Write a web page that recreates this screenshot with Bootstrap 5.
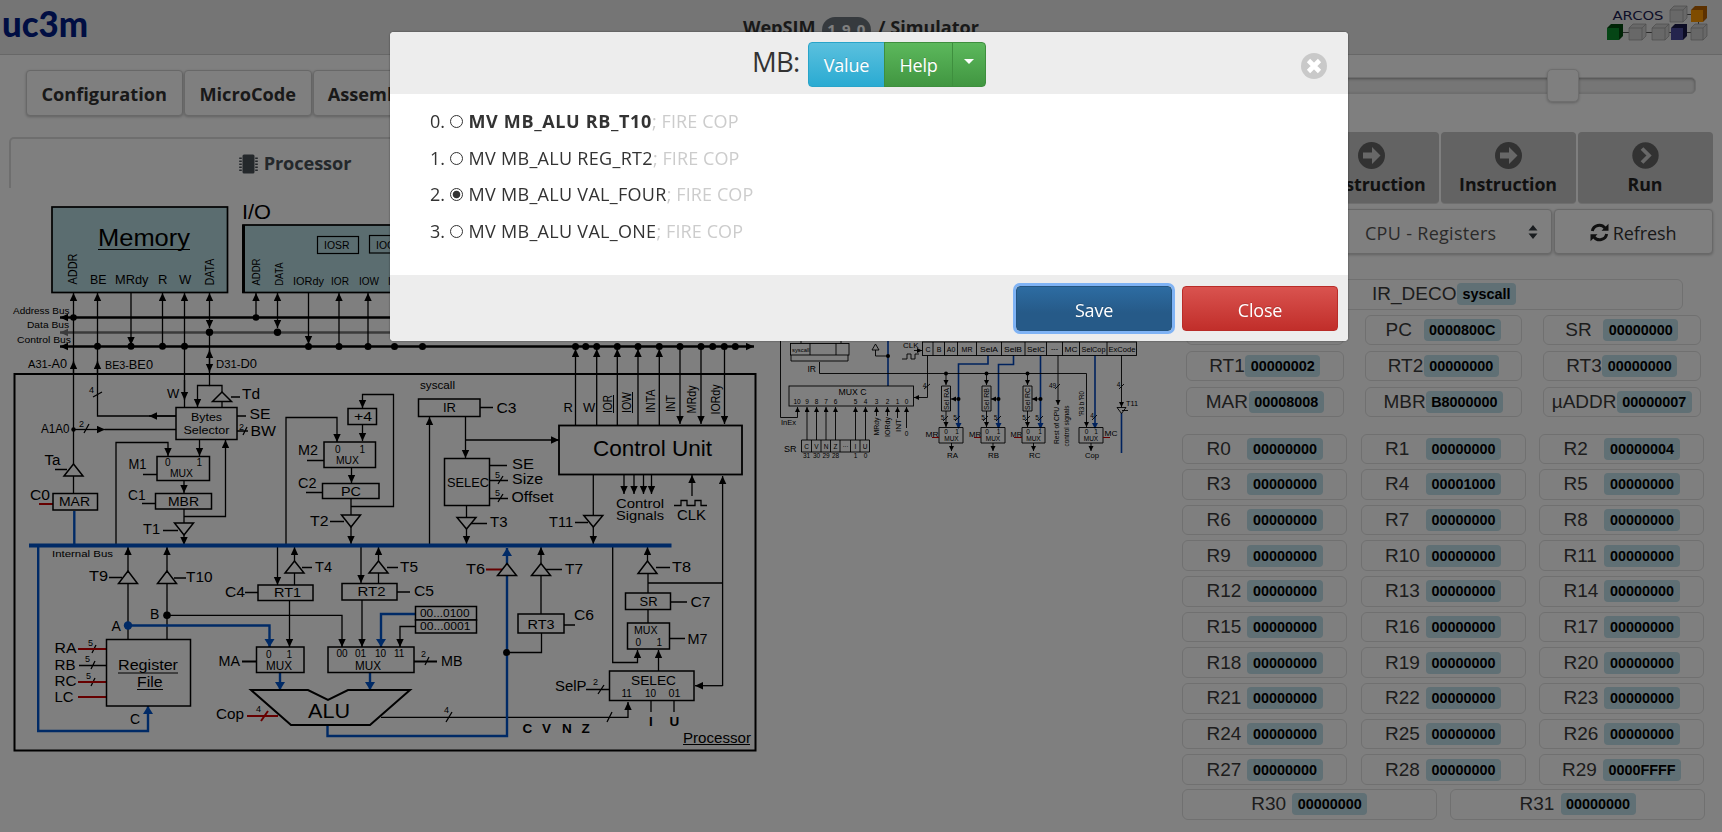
<!DOCTYPE html>
<html lang="en">
<head>
<meta charset="utf-8">
<meta name="viewport" content="width=device-width, initial-scale=1">
<title>WepSIM / Simulator</title>
<link href="https://cdn.jsdelivr.net/npm/bootstrap@5.3.0/dist/css/bootstrap.min.css" rel="stylesheet">
<style>
body{font-family:"Open Sans","Noto Sans",sans-serif;font-size:17.3px;color:#212529;overflow:hidden;height:832px;background:#fff}
.topbar{height:55px;background:#ebebeb;border-bottom:1px solid #cfcfcf}
.topbar .side-box{width:160px}
.app-title{font-size:18.1px;font-weight:700;color:#333;line-height:24px;margin-top:15px;letter-spacing:0;white-space:nowrap}
.app-title .badge{font-size:15px;width:49px;height:26px;padding:4px 0 0;background:#6c757d;vertical-align:top;margin:2px 2px 0;letter-spacing:1px;line-height:17px}
.left-col{width:1172px;flex:none}
.right-col{width:550px;flex:none;padding-right:9.5px}
.menu-row{height:82px;padding:15px 0 0 26px;gap:1px}
.btn-flat{background:#fff;border:1px solid #d0d0d0;border-radius:4px;box-shadow:0 1px 3px rgba(0,0,0,.25);font-size:18.2px;font-weight:700;color:#333;height:46px;padding:4px 0 0;letter-spacing:0;white-space:nowrap}
.tab-row{margin-left:9px;height:53px}
.tab-cpu{width:571px;height:51px;border:1px solid #ddd;border-width:2px 1px 0 2px;border-radius:5px 5px 0 0;font-size:18.2px;font-weight:700;color:#495057;letter-spacing:-.1px;padding-top:1px}
.tab-cpu svg{margin-right:6px}
.diagrams text{font-family:"Liberation Sans",Arial,sans-serif;fill:#000}
.slider-row{height:77px;padding:22px 16.5px 0 0}
.track{height:17px;flex:1;border-radius:5px;background:#ececec;border:1px solid #ddd;box-shadow:inset 0 1px 3px rgba(0,0,0,.35);position:relative}
.knob{position:absolute;right:116.5px;top:-9px;width:32px;height:33px;border-radius:5px;background:#fff;border:1px solid #ddd;box-shadow:0 1px 3px rgba(0,0,0,.25)}
.exec-row{height:71px;gap:2px;margin-bottom:6px}
.btn-exec{width:135px;background:#c6c6c6;border:0;border-radius:4px;box-shadow:0 1px 0 #ddd;font-size:17.8px;font-weight:700;color:#222;letter-spacing:-.1px;padding:2px 0 0;line-height:26px}
.btn-exec svg{display:block;margin:2px auto 2px}
.sel-row{height:45px;gap:2px;margin-bottom:25px}
.sel-row .btn-flat{font-weight:400;font-size:18px;height:45px;letter-spacing:-.1px;padding-top:3px}
.sel-row .sel-box{flex:1;color:#555;letter-spacing:.3px}
.sel-box svg{margin:-3px 13px 0 31px}
.refresh-btn{width:159px}
.refresh-btn svg{margin-top:-1px}
.reg{border:1.5px solid #e0e0e0;border-radius:6px;height:30.5px;font-family:"Liberation Sans",Arial,sans-serif;font-size:19px;color:#3a3a3a;line-height:28px;white-space:nowrap}
.reg .val{font-size:14.4px;font-weight:700;color:#000;background:#c0e0ea;border-radius:4px;height:22px;line-height:23px;padding:0 5.5px}
.hw{padding:0 11px 0 14px;row-gap:5.5px;display:grid;grid-template-columns:157.5px 157.5px 157.5px;column-gap:21px}
.hw .wide{grid-column:1/4;width:478px;margin-left:19px;margin-bottom:-.5px}
.gp{margin-top:16.5px;padding-left:10px;display:grid;grid-template-columns:repeat(3,165px);column-gap:13.5px;row-gap:5.17px}
.gp2{padding:4.3px 0 0 10px;gap:13.5px}
.gp2 .reg{width:254.7px}
.modal-backdrop.show{opacity:.5}
.sig-modal .modal-dialog{max-width:none;width:958px;margin:32px 0 0 390px}
.sig-modal .modal-content{border:0;border-radius:4px;height:309px;overflow:hidden;box-shadow:0 0 2px rgba(0,0,0,.5);background:#fff}
.sig-head{height:62px;background:#ededed}
.sig-head .head-group{padding-left:362px}
.sig-head .btn-group{padding-top:10px}
.sig-title{font-size:27.5px;color:#333;line-height:40px;width:56px;padding-top:9.5px;letter-spacing:-.8px;margin:0}
.btn-sig{border-radius:4px;height:45px;color:#fff;font-size:18px;line-height:25px;padding:1px 0 0;text-shadow:0 -1px 0 rgba(0,0,0,.15);letter-spacing:-.2px}
.btn-sig:hover{color:#fff}
.btn-sig svg{position:relative;top:-2px}
.b-info{background:linear-gradient(#5bc0de,#2aabd2);border-color:#28a4c9}
.b-ok{background:linear-gradient(#5cb85c,#419641);border-color:#3e8f3e}
.b-save{background:linear-gradient(#2d6ca2,#265a88 60%);border-color:#245580;box-shadow:0 0 0 3px #7fb3f5}
.b-close{background:linear-gradient(#d9534f,#c12e2a);border-color:#b92c28}
.close-dot{right:21px;top:21px}
.sig-body{height:181px;padding:9px 0 0 40px;color:#333}
.sig-body li{height:36.6px;line-height:36px;font-size:18px;white-space:nowrap;list-style:none;letter-spacing:.3px}
.sig-body b{letter-spacing:.65px}
.sig-body .num{width:19.5px;letter-spacing:-.1px}
.sig-body .rad{width:13px;height:13px;border:1px solid #333;border-radius:50%;margin-right:6px;background:#fff;margin-top:1px}
.sig-body .rad.on{background:radial-gradient(#333 0 3.4px,#fff 4.2px)}
.sig-body .cop{color:#ccc;letter-spacing:.1px}
.sig-foot{height:66px;background:#ededed;padding:11px 10px 0 0;gap:10px}
.sig-foot .btn{width:156px;padding-top:3px}
</style>
</head>
<body>
<header class="topbar d-flex justify-content-between align-items-start">
  <div class="side-box">
    <svg width="100" height="50"><text x="2" y="36.500" textLength="86" font-family="Lato, sans-serif" font-weight="900" font-size="36" fill="#001c86">uc3m</text></svg>
  </div>
  <div class="app-title">WepSIM <span class="badge rounded-pill">1.9.0</span> / Simulator</div>
  <div class="side-box">
    <svg width="160" height="50" viewBox="1562 0 160 50">
      <text x="1612.500" y="19.500" font-family="DejaVu Sans, sans-serif" font-size="12" textLength="51" fill="#1c1c50">ARCOS</text>
      <path d="M1684 14.500h8M1698.500 21v6M1621 32.500h9M1643 32.500h10M1665 32.500h7M1686 32.500h6" stroke="#555" fill="none"/>
      <g stroke="#999" stroke-width=".7">
        <path d="M1670 10l4-4h13v12l-4 4h-13z" fill="#d0d0d0"/><path d="M1670 10h13v12m0-12l4-4" fill="none"/>
        <path d="M1629 28l4-4h13v12l-4 4h-13z" fill="#d0d0d0"/><path d="M1629 28h13v12m0-12l4-4" fill="none"/>
        <path d="M1652 28l4-4h13v12l-4 4h-13z" fill="#d0d0d0"/><path d="M1652 28h13v12m0-12l4-4" fill="none"/>
        <path d="M1691 28l4-4h12v12l-4 4h-12z" fill="#d0d0d0"/><path d="M1691 28h12v12m0-12l4-4" fill="none"/>
      </g>
      <path d="M1691 10l4-4h12v12l-4 4h-12z" fill="#b86200"/><path d="M1691 10h12v12h-12z" fill="#ff9800"/>
      <path d="M1607 28l4-4h12v12l-4 4h-12z" fill="#00480c"/><path d="M1607 28h12v12h-12z" fill="#0a8a2a"/>
      <path d="M1671 28l4-4h12v12l-4 4h-12z" fill="#181848"/><path d="M1671 28h12v12h-12z" fill="#4a4a9c"/>
    </svg>
  </div>
</header>

<main class="d-flex">
  <section class="left-col">
    <div class="menu-row d-flex">
      <button class="btn btn-flat" style="width:156.500px">Configuration</button>
      <button class="btn btn-flat" style="width:128.500px">MicroCode</button>
      <button class="btn btn-flat" style="width:116px">Assembly</button>
    </div>
    <div class="tab-row">
      <div class="tab-cpu d-flex align-items-center justify-content-center">
        <svg width="19" height="20" viewBox="0 0 19 20"><rect x="3.500" y=".5" width="12" height="19" rx="1.500" fill="#495057"/><path d="M1.500 3.500v14M17.500 3.500v14" stroke="#495057" stroke-width="2.600" stroke-dasharray="1.500 1.500"/></svg>Processor
      </div>
    </div>
    <div class="diagrams d-flex">
      <svg width="763" height="575" viewBox="0 190 763 575" fill="none" stroke="none" font-size="14">
        <defs>
          <marker id="k" markerUnits="userSpaceOnUse" markerWidth="9" markerHeight="9" refX="8" refY="4" orient="auto-start-reverse"><path d="M0 .3L8 4L0 7.700z" fill="#000"/></marker>
          <marker id="b" markerUnits="userSpaceOnUse" markerWidth="10" markerHeight="11" refX="8" refY="5" orient="auto-start-reverse"><path d="M0 0L8 5L0 10z" fill="#05c"/></marker>
          <marker id="g" markerUnits="userSpaceOnUse" markerWidth="9" markerHeight="9" refX="8" refY="4" orient="auto-start-reverse"><path d="M0 .3L8 4L0 7.700z" fill="#777"/></marker>
        </defs>
        <!-- memory and I/O blocks -->
        <g stroke="#000" stroke-width="1.700" fill="#b7dbe0">
          <rect x="52" y="207" width="175.500" height="85.500"/><rect x="243" y="225" width="240" height="67.500"/>
          <path d="M243.500 225v68" stroke-width="3"/>
          <rect x="317.500" y="236.500" width="41" height="17" stroke-width="1.200"/><rect x="369.500" y="235.500" width="41" height="17.500" stroke-width="1.200"/>
        </g>
        <!-- system buses -->
        <path d="M60 317.500H754" stroke="#000" stroke-width="2.600" marker-start="url(#k)"/>
        <path d="M60 332.500H754" stroke="#777" stroke-width="2.600" marker-start="url(#g)"/>
        <path d="M60 346.500H754" stroke="#000" stroke-width="2.600" marker-start="url(#k)" marker-end="url(#k)"/>
        <g stroke="#000" stroke-width="1.300">
          <g marker-start="url(#k)">
            <path d="M73.500 293V464"/><path d="M97.500 293V416H176"/><path d="M162.500 293V346"/><path d="M184.500 293V407"/>
            <path d="M256 293V317"/><path d="M339 293V346"/><path d="M368 293V346"/>
            <path d="M575.500 349V425"/><path d="M596.700 349V425"/><path d="M617.300 349V425"/><path d="M638 349V425"/><path d="M659.300 349V425"/>
          </g>
          <g marker-end="url(#k)">
            <path d="M131 293V345"/><path d="M308.500 293V344"/><path d="M680 346V424"/><path d="M701 346V424"/><path d="M724.500 346V424"/>
            <path d="M73.500 375V361"/><path d="M97.500 375V361"/><path d="M184.500 380V400"/><path d="M176 416H149"/><path d="M73 429.500H105"/>
            <path d="M209.500 385.500H197.500V407"/><path d="M116 545V442.500H168V456"/><path d="M199.500 439V456"/><path d="M184 480V493"/><path d="M184 516.500H225.500V440"/><path d="M184 535V545"/>
            <path d="M286 545V417.500H337V442"/><path d="M351 506.500H393.500V394.500H362.500V408"/><path d="M362.500 424V441"/><path d="M351.500 467V483"/><path d="M351 527V544"/>
            <path d="M429.500 545V417"/><path d="M465.500 416V458"/><path d="M465.500 440H559"/><path d="M466.500 529V544"/><path d="M593.300 527V544"/>
            <path d="M624 474V494"/><path d="M634 474V494"/><path d="M643.500 474V494"/><path d="M651.500 474V494"/><path d="M692 496V475"/><path d="M722.600 686V476"/><path d="M722.600 685.700H695"/>
            <path d="M128 571V547"/><path d="M167 571V547"/><path d="M167 615.300H342V647"/><path d="M277.500 547V585"/><path d="M294.500 561V547"/><path d="M289.500 600V647"/>
            <path d="M361 547V583"/><path d="M378.500 561V547"/><path d="M362 600V647"/><path d="M415 626.500H400V647"/><path d="M381 717.300H628V702"/>
            <path d="M541 563V547"/><path d="M647.500 561V547"/><path d="M612.700 546V662.500H637.500V650"/><path d="M658.500 671V650"/>
          </g>
          <path d="M209.500 293V328" marker-start="url(#k)" marker-end="url(#k)"/><path d="M277.500 293V328" marker-start="url(#k)" marker-end="url(#k)"/>
          <path d="M209.500 350V372" marker-start="url(#k)" marker-end="url(#k)"/>
          <path d="M209.500 332V385.500H222V392M222 401.500V407M231 397h9M237 416h9M237 431h11M105 429.500H176M84 433l5-9M93 397l9-5M243 435l4-8M55 469.500h12M73.500 476v17M143 474.500h14M142 503.500h13M184 509v14M163 530.500h15M307 460.500h17M306 492.500h17M351 498v17M330 521.500h14M480 407.500h13M489 465.500h18M489 480.500h19M489 498.500h19M498 484l5-8M498 502l5-8M466.500 505v12M471 523.500h16M593.300 474v42M575 522.500h13M674 505.500h7v-5h6v5h8v-5h6v5h6M109 577.500h13M174 578h12M128 583V639M167 583V639M79 665.500h27M92 653l4-8M91 669l4-8M91 686l4-8M245 592.500h13M294.500 573v12M302 567.500h10M378.500 573v11M387 567.500h11M397 592h13M425 665l4-8M446 722l6-10M607 722l5-10M651 701v11M674 701v11M546 569.500h16M541 575v39M564 625h11M541.500 633V652.500H507M656 567.500h14M648 573v20M648 583H722.600M670 602h17M648 609v14M669 638.500h16M586 689.500h23M598 694l6-9"/>
          <path d="M242 661.500h15M414 661.500h23" stroke-width="1.800"/>
        </g>
        <!-- internal bus and active paths -->
        <g stroke="#05c" stroke-width="2.400">
          <path d="M29 545.500H671.500" stroke-width="4"/><path d="M74.300 511V545"/>
          <g marker-end="url(#b)"><path d="M38.200 546V731H148V706"/><path d="M128 625.500H269.500V647"/><path d="M415 614H381V647"/><path d="M280 672V690"/><path d="M370 672V690"/><path d="M327.500 725V736H507V548"/></g>
        </g>
        <circle cx="128" cy="625.500" r="4.200" fill="#05c"/>
        <path d="M39 504h14M78 649h28M78 682h28M78 697h28M486 569.500h16M247 716h31M261 721l7-10" stroke="#c00" stroke-width="2"/>
        <!-- tri-state buffers, registers, muxes -->
        <g stroke="#000" stroke-width="1.500" fill="#fff">
          <path d="M222 392l-9.500 9.500h19zM73.500 464l-9.500 12h19zM184 535l-9.500-12h19zM351 527l-9.500-12h19zM466.500 529l-9.500-11.500h19zM593.300 527l-9.500-11.500h19zM128 571l-9.500 12.500h19zM167 571l-9.500 12.500h19zM294.500 561l-9.500 12h19zM378.500 561l-9.500 12h19zM507 563.500l-9.500 12h19zM541 563.500l-9.500 12h19zM647.500 561l-9.500 12.500h19z"/>
          <rect x="176" y="407.500" width="61" height="32"/><rect x="53" y="493.500" width="44.500" height="16.500"/><rect x="157" y="456.500" width="52.500" height="24"/><rect x="155.500" y="493.500" width="56" height="15.500"/>
          <rect x="324" y="442" width="51.500" height="25.500"/><rect x="348" y="408.500" width="28.500" height="16"/><rect x="322.500" y="483.500" width="56.500" height="15"/>
          <rect x="418.500" y="399" width="61.500" height="17.500"/><rect x="444.500" y="458.500" width="45" height="47"/><rect x="559" y="425.500" width="183" height="49" stroke-width="1.800"/>
          <rect x="106.500" y="639.500" width="84" height="66.500"/><rect x="258" y="585" width="55" height="15.500"/><rect x="342" y="583.500" width="55" height="16.500"/>
          <rect x="415.500" y="606.500" width="61" height="13.500"/><rect x="415.500" y="620" width="61" height="13"/><rect x="256.500" y="647" width="47.500" height="25.500"/><rect x="328" y="647" width="86" height="25.500"/>
          <rect x="518" y="614" width="46" height="19"/><rect x="625.500" y="593" width="45" height="16.500"/><rect x="627.500" y="623" width="42" height="26"/><rect x="609.500" y="671" width="84.500" height="29.500"/>
          <path d="M251 690H308L328 700L348 690H410L370 725H291z" stroke-width="2"/>
          <rect x="14.500" y="374" width="741" height="376.500" fill="none" stroke-width="2"/>
        </g>
        <g fill="#000">
          <circle cx="73.500" cy="317.500" r="3.300"/><circle cx="256" cy="317.500" r="3.300"/><circle cx="209.500" cy="332.300" r="3.700"/><circle cx="277.500" cy="332.300" r="3.700"/><circle cx="73.500" cy="429.500" r="2.200"/>
          <circle cx="97.500" cy="346.300" r="3.500"/><circle cx="131" cy="346.300" r="3.500"/><circle cx="162.500" cy="346.300" r="3.500"/><circle cx="184.500" cy="346.300" r="3.500"/><circle cx="308.500" cy="346.500" r="3.500"/><circle cx="339" cy="346.500" r="3.500"/><circle cx="368" cy="346.500" r="3.500"/><circle cx="394.500" cy="346.500" r="3.500"/><circle cx="422.500" cy="346.500" r="3.500"/>
          <circle cx="575.500" cy="346.500" r="3.500"/><circle cx="585.700" cy="346.500" r="3.500"/><circle cx="596.700" cy="346.500" r="3.500"/><circle cx="617.300" cy="346.500" r="3.500"/><circle cx="638" cy="346.500" r="3.500"/><circle cx="659.300" cy="346.500" r="3.500"/><circle cx="680" cy="346.500" r="3.500"/><circle cx="701" cy="346.500" r="3.500"/><circle cx="712.700" cy="346.500" r="3.500"/><circle cx="724.300" cy="346.500" r="3.500"/><circle cx="735.300" cy="346.500" r="3.500"/>
          <circle cx="167" cy="615.300" r="3.800"/><circle cx="506.600" cy="652.500" r="3.500"/>
        </g>
        <path d="M98 249.500h92M118 673h60M137 689.500h26M683 744.500h67M613.500 395v18M632.500 392v21" stroke="#000"/>
        <text x="98" y="246" font-size="24" textLength="92">Memory</text><text x="242" y="219" font-size="21" textLength="29">I/O</text>
        <g font-size="13"><text x="90" y="284" textLength="16.500">BE</text><text x="115" y="284" textLength="33.500">MRdy</text><text x="158" y="284">R</text><text x="179" y="284">W</text>
          <text transform="translate(76.500 284.500)rotate(-90)" textLength="31">ADDR</text><text transform="translate(214 285.500)rotate(-90)" textLength="27">DATA</text></g>
        <g font-size="11"><text transform="translate(260 285.500)rotate(-90)" textLength="27">ADDR</text><text transform="translate(282.500 285.500)rotate(-90)" textLength="23">DATA</text>
          <text x="293" y="284.500" font-size="10.500" textLength="31">IORdy</text><text x="331" y="285" font-size="10" textLength="18">IOR</text><text x="359" y="285" font-size="10" textLength="20">IOW</text><text x="388" y="285" font-size="10">INT</text><text x="324" y="249" font-size="10" textLength="25.500">IOSR</text><text x="376" y="248.500" font-size="10" textLength="26">IOCR</text></g>
        <g font-size="9.500"><text x="13" y="314" textLength="56.500">Address Bus</text><text x="27" y="328" textLength="42">Data Bus</text><text x="17" y="343" textLength="54">Control Bus</text><text x="52" y="557" textLength="61">Internal Bus</text></g>
        <text x="28" y="368" font-size="10.500" textLength="39">A31-<tspan font-size="12">A0</tspan></text><text x="105" y="368.500" font-size="10.500" textLength="48">BE3-<tspan font-size="12.500">BE0</tspan></text><text x="216" y="368" font-size="10.500" textLength="41">D31-<tspan font-size="12">D0</tspan></text>
        <g font-size="9"><text x="89" y="393">4</text><text x="79" y="427">2</text><text x="239" y="430">2</text><text x="495" y="478">5</text><text x="495" y="496">5</text><text x="88" y="646">5</text><text x="85" y="662">5</text><text x="86" y="679">5</text><text x="256" y="712">4</text><text x="421" y="657">2</text><text x="444" y="712.500">4</text><text x="593" y="685">2</text></g>
        <text x="41" y="433" font-size="12" textLength="28.500">A1A0</text>
        <g font-size="11"><text x="191" y="421" textLength="31">Bytes</text><text x="183.500" y="434" textLength="46">Selector</text><text x="170" y="477" textLength="23">MUX</text><text x="336" y="464" textLength="23">MUX</text><text x="420" y="389" textLength="35">syscall</text><text x="266" y="669.500" textLength="26" font-size="12">MUX</text><text x="355" y="669.500" textLength="26" font-size="12">MUX</text><text x="634" y="634" textLength="23.500">MUX</text></g>
        <g font-size="10"><text x="165" y="466">0</text><text x="196.500" y="466">1</text><text x="335" y="452.500">0</text><text x="359.500" y="452.500">1</text><text x="266" y="657.500">0</text><text x="286.500" y="657.500">1</text><text x="336.500" y="657">00</text><text x="355" y="657">01</text><text x="375" y="657">10</text><text x="394" y="657">11</text><text x="635.500" y="646">0</text><text x="656.500" y="646">1</text><text x="621.500" y="697">11</text><text x="645" y="697">10</text><text x="668.500" y="697" textLength="12">01</text><text x="420" y="616.500" font-size="11" textLength="49.500">00...0100</text><text x="420" y="630" font-size="11" textLength="50.500">00...0001</text></g>
        <g font-size="13"><text x="167" y="397.500">W</text><text x="59" y="506" textLength="31">MAR</text><text x="168" y="506" textLength="31">MBR</text><text x="341" y="496" textLength="20">PC</text><text x="354" y="421" textLength="18">+4</text><text x="443" y="412" textLength="13">IR</text><text x="447" y="487" font-size="12" textLength="42">SELEC</text><text x="274" y="597" textLength="27">RT1</text><text x="357.500" y="596" textLength="28">RT2</text><text x="527.500" y="629" textLength="27">RT3</text><text x="639.500" y="606" textLength="18">SR</text><text x="631" y="685" font-size="12" textLength="45">SELEC</text><text x="563.500" y="412">R</text><text x="583" y="412">W</text></g>
        <g font-size="14"><text x="242" y="399" textLength="18">Td</text><text x="249.500" y="419" textLength="21">SE</text><text x="250.500" y="436" textLength="25.500">BW</text><text x="44.500" y="465" textLength="16">Ta</text><text x="30" y="500" textLength="20">C0</text><text x="128.500" y="469" textLength="18">M1</text><text x="128" y="500" textLength="17.500">C1</text><text x="143" y="534" textLength="17">T1</text><text x="298" y="455" textLength="20">M2</text><text x="298" y="488" textLength="18.500">C2</text><text x="310" y="525.500" textLength="18.500">T2</text><text x="496.500" y="413" textLength="20">C3</text><text x="512" y="469" textLength="22">SE</text><text x="512" y="484" textLength="31">Size</text><text x="511.500" y="502" textLength="42">Offset</text><text x="490" y="526.500" textLength="17.500">T3</text><text x="549" y="526.500" textLength="24">T11</text>
          <text x="89" y="581" textLength="19">T9</text><text x="186" y="582" textLength="26.500">T10</text><text x="225" y="597" textLength="20">C4</text><text x="315" y="571.500" textLength="17">T4</text><text x="400" y="571.500" textLength="18">T5</text><text x="414" y="595.500" textLength="20">C5</text><text x="466" y="573.500" textLength="19">T6</text><text x="565" y="573.500" textLength="18">T7</text><text x="574" y="620" textLength="20">C6</text><text x="672" y="571.500" textLength="19">T8</text><text x="690.500" y="606.500" textLength="20">C7</text><text x="687.500" y="643.500" textLength="20">M7</text>
          <text x="150" y="619">B</text><text x="111.500" y="630.500">A</text><text x="130" y="724">C</text><text x="54.500" y="652.500" textLength="22">RA</text><text x="54.500" y="669.500" textLength="21">RB</text><text x="54.500" y="685.500" textLength="22">RC</text><text x="54.500" y="701.500" textLength="19">LC</text><text x="218.500" y="665.500" textLength="21.500">MA</text><text x="441" y="665.500" textLength="21.500">MB</text><text x="216" y="719" textLength="28">Cop</text><text x="555" y="691" textLength="31.500">SelP</text>
          <text x="118" y="669.500" textLength="60">Register</text><text x="137" y="687" textLength="25.500">File</text><text x="683" y="743" textLength="68">Processor</text><g font-size="12.500"><text x="616" y="507.500" textLength="48">Control</text><text x="616" y="520" textLength="48">Signals</text></g><text x="677" y="520" textLength="29">CLK</text></g>
        <text x="593" y="456" font-size="22" textLength="119">Control Unit</text><text x="308" y="718" font-size="21" textLength="42">ALU</text>
        <g font-size="13.500" font-weight="700"><text x="522.500" y="733">C</text><text x="542" y="733">V</text><text x="562" y="733">N</text><text x="581.500" y="733">Z</text><text x="649" y="726">I</text><text x="669.500" y="726">U</text></g>
        <g font-size="12"><text transform="translate(612 413)rotate(-90)" textLength="18">IOR</text><text transform="translate(631 413)rotate(-90)" textLength="21">IOW</text><text transform="translate(654.500 413)rotate(-90)" textLength="23.500">INTA</text><text transform="translate(675 412)rotate(-90)" textLength="17">INT</text><text transform="translate(696 413.500)rotate(-90)" textLength="28">MRdy</text><text transform="translate(719.500 414.500)rotate(-90)" textLength="30">IORdy</text></g>
      </svg>

      <!-- control unit detail -->
      <svg width="400" height="575" viewBox="763 190 400 575" fill="none" font-size="7">
        <defs><marker id="s" markerUnits="userSpaceOnUse" markerWidth="6" markerHeight="6" refX="5" refY="2.500" orient="auto-start-reverse"><path d="M0 0L5 2.500L0 5z" fill="#000"/></marker>
        <marker id="t" markerUnits="userSpaceOnUse" markerWidth="7" markerHeight="7" refX="5" refY="3" orient="auto-start-reverse"><path d="M0 0L6 3L0 6z" fill="#04b"/></marker></defs>
        <g stroke="#04b" stroke-width="1.600"><path d="M888 300V386M1121.500 413V453"/><g marker-end="url(#t)"><path d="M988 355.500V364H958.500V428"/><path d="M1013.500 355.500V364.500H998.500V428"/><path d="M1040.500 355.500V428"/><path d="M1095 355.500V428"/></g></g>
        <g stroke="#000" stroke-width=".9">
          <rect x="790.500" y="343.500" width="58.500" height="11.500"/><path d="M791 355v6H848v-6M810 343v12M836 343v12M801 341v2M841 341v2"/>
          <rect x="922.500" y="342" width="214" height="13.500"/><path d="M933 342v13.500M944.500 342v13.500M957.500 342v13.500M976.500 342v13.500M1001.500 342v13.500M1025 342v13.500M1046.500 342v13.500M1062.500 342v13.500M1079.500 342v13.500M1107 342v13.500"/>
          <rect x="789" y="386" width="124.500" height="20"/><path d="M801.500 440h68v12h-68zM811.500 440v12M821 440v12M830.500 440v12M840 440v12M850.500 440v12M860 440v12"/>
          <path d="M941.500 386h9v25h-9zM982 386h9v25h-9zM1023 386h9v25h-9zM939 427.500h24V443h-24zM981 427.500h24V443h-24zM1022 427.500h23V443h-23zM1079 427.500h24V443h-24zM875.500 344l-3.500 6h7zM1121.500 413.500l-4.500-6h9z"/>
          <path d="M875.500 350V356H888M902 359h5v-5h4v5h4v-5h4M924 389l6-5M943 421l5-5M955 421l5-5M983 421l5-5M996 421l5-5M1025 421l5-5M1038 421l5-5M1055 389l5-5M1092 420l5-5M1119 389l5-5M1122 410.500h6"/>
          <g marker-end="url(#s)"><path d="M780.500 300V417.500H797.500V407"/><path d="M807 440V407"/><path d="M816.500 440V407"/><path d="M826 440V407"/><path d="M835.500 440V407"/><path d="M855.500 440V407"/><path d="M865.500 440V407"/><path d="M876.500 416V407"/><path d="M887.500 416V407"/><path d="M897.500 418V407"/><path d="M906.500 428V407"/>
            <path d="M819.500 362V373.500H1086.500V427"/><path d="M914 350.500H922"/><path d="M927.500 355.500V397.500H914"/><path d="M946 373V385"/><path d="M986.500 373V385"/><path d="M1027.500 373V385"/><path d="M946 411V427"/><path d="M986.500 411V427"/><path d="M1027.500 411V427"/><path d="M959 399H951"/><path d="M999 399H991"/><path d="M1041 399H1032"/><path d="M951.500 443V451"/><path d="M993 443V451"/><path d="M1033.500 443V451"/><path d="M1091 443V451"/><path d="M1058 355.500V405"/><path d="M1121.500 355.500V407"/></g>
        </g>
        <g fill="#000"><circle cx="888" cy="356" r="2"/><circle cx="946" cy="373.500" r="2"/><circle cx="986.500" cy="373.500" r="2"/><circle cx="1027.500" cy="373.500" r="2"/><circle cx="958.500" cy="399" r="2"/><circle cx="998.500" cy="399" r="2"/><circle cx="1040.500" cy="399" r="2"/></g>
        <path d="M932 437.500h7M974 437.500h7M1014 437.500h8M1103 437.500h7" stroke="#c00" stroke-width="1.200"/>
        <text x="792" y="352" font-size="6" textLength="17.500">syscall</text><text x="807.500" y="372" font-size="8.500" textLength="8.500">IR</text><text x="903" y="348" textLength="15.500">CLK</text><text x="781" y="425" textLength="15">InEx</text><text x="784" y="452" font-size="9" textLength="12.500">SR</text><text x="838.500" y="395" font-size="8.500" textLength="28">MUX C</text>
        <g text-anchor="middle"><text x="928" y="352">C</text><text x="939" y="352">B</text><text x="951" y="352">A0</text><text x="967" y="352">MR</text><text x="989" y="351.500" textLength="18">SelA</text><text x="1013" y="352" textLength="18">SelB</text><text x="1036" y="352" textLength="18">SelC</text><text x="1054.500" y="351">---</text><text x="1071" y="352" textLength="13">MC</text><text x="1093.500" y="351.500" textLength="24">SelCop</text><text x="1122" y="351.500" textLength="27">ExCode</text></g>
        <g text-anchor="middle" font-size="6.500"><text x="797" y="404">10</text><text x="807" y="404">9</text><text x="816.500" y="404">8</text><text x="826" y="404">7</text><text x="835.500" y="404">6</text><text x="855.500" y="404">5</text><text x="865.500" y="404">4</text><text x="876.500" y="404">3</text><text x="887.500" y="404">2</text><text x="897.500" y="404">1</text><text x="906.500" y="404">0</text><text x="906.500" y="436">0</text>
          <text x="806.500" y="448.500">C</text><text x="816.500" y="448.500">V</text><text x="826" y="448.500">N</text><text x="835.500" y="448.500">Z</text><text x="845.500" y="447">...</text><text x="855.500" y="448.500">I</text><text x="865" y="448.500">U</text><text x="806.500" y="458">31</text><text x="816.500" y="458">30</text><text x="826" y="458">29</text><text x="835.500" y="458">28</text><text x="855.500" y="458">1</text><text x="865.500" y="458">0</text>
          <text x="946" y="434">0</text><text x="957" y="434">1</text><text x="987" y="434">0</text><text x="998.500" y="434">1</text><text x="1028" y="434">0</text><text x="1040" y="434">1</text><text x="1086.500" y="434">0</text><text x="1096" y="434">1</text><text x="951.500" y="441">MUX</text><text x="993" y="441">MUX</text><text x="1033.500" y="441">MUX</text><text x="1091" y="441">MUX</text>
          <text x="942.500" y="420">5</text><text x="955" y="420">5</text><text x="983" y="420">5</text><text x="995.500" y="420">5</text><text x="1024" y="420">5</text><text x="1037" y="420">5</text><text x="924.500" y="387.500">4</text><text x="1052.500" y="387.500">49</text><text x="1118.500" y="387">4</text><text x="1092" y="418">4</text></g>
        <g font-size="7.500"><text x="925.500" y="436.500" textLength="13">MR</text><text x="969" y="436.500" textLength="12">MR</text><text x="1010.500" y="436.500" textLength="11.500">MR</text><text x="1104.500" y="436" textLength="13">MC</text><text x="947" y="458" textLength="11">RA</text><text x="988" y="458" textLength="11">RB</text><text x="1029" y="458" textLength="11.500">RC</text><text x="1085" y="458" textLength="14">Cop</text><text x="1126" y="406" textLength="12">T11</text></g>
        <text transform="translate(879 435.500)rotate(-90)" textLength="18">MRdy</text><text transform="translate(890 437)rotate(-90)" textLength="20">IORdy</text><text transform="translate(900.500 432)rotate(-90)" textLength="13">INT</text>
        <text transform="translate(948.700 410)rotate(-90)" textLength="22">Sel RA</text><text transform="translate(989.300 410)rotate(-90)" textLength="22">Sel RB</text><text transform="translate(1030.300 410)rotate(-90)" textLength="22">Sel RC</text><text transform="translate(1059 444)rotate(-90)" textLength="37">Rest of CPU</text><text transform="translate(1068.500 446.500)rotate(-90)" textLength="41">control signals</text><text transform="translate(1084 416)rotate(-90)" font-size="6.500" textLength="25">'R3 b 'R0</text>
      </svg>
    </div>
  </section>

  <section class="right-col">
    <div class="slider-row d-flex"><div class="track"><div class="knob"></div></div></div>
    <div class="exec-row d-flex justify-content-end">
      <button class="btn btn-exec"><svg width="27" height="27" viewBox="0 0 27 27"><circle cx="13.500" cy="13.500" r="13.500" fill="#646464"/><path d="M5 10.500h9V5l8.500 8.500L14 22v-5.500H5z" fill="#d0d0d0"/></svg>µInstruction</button>
      <button class="btn btn-exec"><svg width="27" height="27" viewBox="0 0 27 27"><circle cx="13.500" cy="13.500" r="13.500" fill="#646464"/><path d="M5 10.500h9V5l8.500 8.500L14 22v-5.500H5z" fill="#d0d0d0"/></svg>Instruction</button>
      <button class="btn btn-exec"><svg width="27" height="27" viewBox="0 0 27 27"><circle cx="13.500" cy="13.500" r="13.200" fill="#646464"/><path d="M10 6.500l7 7-7 7" fill="none" stroke="#d0d0d0" stroke-width="3.800"/></svg>Run</button>
    </div>
    <div class="sel-row d-flex">
      <button class="btn btn-flat sel-box d-flex align-items-center justify-content-end">CPU - Registers<svg width="10" height="14" viewBox="0 0 10 14"><path d="M5 0l4.500 5.500h-9zM5 14L.5 8.500h9z" fill="#343a40"/></svg></button>
      <button class="btn btn-flat refresh-btn d-flex align-items-center justify-content-center"><svg width="19" height="19" viewBox="0 0 19 19" class="me-1" fill="none" stroke="#222" stroke-width="3"><path d="M2.300 8A7.200 7.200 0 0 1 15 5M16.700 11A7.200 7.200 0 0 1 4 14"/><path d="M18.500 .8v7h-7zM.5 18.200v-7h7z" fill="#222" stroke="none"/></svg>Refresh</button>
    </div>
    <div class="hw" id="hw"></div>
    <div class="gp" id="gp"></div>
    <div class="gp2 d-flex" id="gp2"></div>
  </section>
</main>

<div class="modal-backdrop show"></div>
<div class="modal sig-modal d-block" tabindex="-1">
  <div class="modal-dialog">
    <div class="modal-content">
      <div class="sig-head d-flex position-relative">
        <div class="head-group d-flex">
          <h4 class="sig-title">MB:</h4>
          <div class="btn-group align-items-start">
            <button class="btn btn-sig b-info" style="width:77px">Value</button>
            <button class="btn btn-sig b-ok" style="width:69px">Help</button>
            <button class="btn btn-sig b-ok" style="width:34px" aria-label="More help"><svg width="10" height="5" viewBox="0 0 10 5" class="d-block mx-auto mb-1"><path d="M0 0h10L5 5z" fill="#fff"/></svg></button>
          </div>
        </div>
        <svg class="close-dot position-absolute" width="26" height="26" viewBox="0 0 26 26"><circle cx="13" cy="13" r="13" fill="#c9c9c9"/><path d="M7.500 7.500l11 11m0-11l-11 11" stroke="#fff" stroke-width="4.600"/></svg>
      </div>
      <div class="sig-body">
        <ul class="m-0 p-0">
          <li class="d-flex align-items-center"><span class="num">0.</span><span class="rad"></span><b>MV MB_ALU RB_T10</b><span class="cop">;&nbsp;FIRE COP</span></li>
          <li class="d-flex align-items-center"><span class="num">1.</span><span class="rad"></span><span>MV MB_ALU REG_RT2</span><span class="cop">;&nbsp;FIRE COP</span></li>
          <li class="d-flex align-items-center"><span class="num">2.</span><span class="rad on"></span><span>MV MB_ALU VAL_FOUR</span><span class="cop">;&nbsp;FIRE COP</span></li>
          <li class="d-flex align-items-center"><span class="num">3.</span><span class="rad"></span><span>MV MB_ALU VAL_ONE</span><span class="cop">;&nbsp;FIRE COP</span></li>
        </ul>
      </div>
      <div class="sig-foot d-flex justify-content-end">
        <button class="btn btn-sig b-save">Save</button>
        <button class="btn btn-sig b-close">Close</button>
      </div>
    </div>
  </div>
</div>

<script src="https://cdn.jsdelivr.net/npm/bootstrap@5.3.0/dist/js/bootstrap.bundle.min.js"></script>
<script>
const box = (name, value, w, extra = '') =>
  `<div class="reg d-flex align-items-center justify-content-center ${extra}"><span class="lbl" style="min-width:${w}px">${name}</span><span class="val">${value}</span></div>`;
document.getElementById('hw').innerHTML =
  box('IR_DECO', 'syscall', 85, 'wide') +
  [['IR', '0000000C', 38], ['PC', '0000800C', 38], ['SR', '00000000', 38],
   ['RT1', '00000002', 36], ['RT2', '00000000', 36], ['RT3', '00000000', 36],
   ['MAR', '00008008', 43], ['MBR', 'B8000000', 42], ['µADDR', '00000007', 65]].map(r => box(...r)).join('');
const known = {2: '00000004', 4: '00001000', 29: '0000FFFF'};
const reg = i => box('R' + i, known[i] || '00000000', 41);
document.getElementById('gp').innerHTML = Array.from({length: 30}, (_, i) => reg(i)).join('');
document.getElementById('gp2').innerHTML = reg(30) + reg(31);
// stretch glyphs, not only the gaps, wherever a label has a set width
document.querySelectorAll('text[textLength]').forEach(t => t.setAttribute('lengthAdjust', 'spacingAndGlyphs'));
</script>
</body>
</html>
